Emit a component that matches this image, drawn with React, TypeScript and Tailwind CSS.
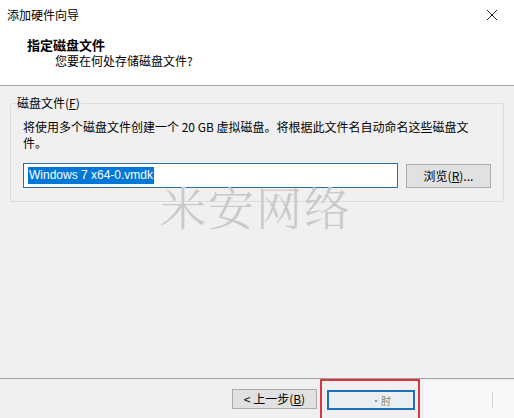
const font = "font-['Microsoft_YaHei','Noto_Sans_CJK_SC',sans-serif]";

export default function App() {
    return (
        <div className={`w-[514px] h-[418px] bg-[#f0f0f0] flex flex-col overflow-hidden text-[12px] text-black ${font}`}>
            {/* Header */}
            <div className="h-[86px] bg-white border-b border-[#a0a0a0] flex flex-col relative">
                <div className="h-[30px] flex items-center pl-[7px] leading-none">添加硬件向导</div>
                <div className="absolute right-[10px] top-[4px] w-[24px] h-[22px] flex items-center justify-center">
                    <svg width="12" height="12" viewBox="0 0 12 12">
                        <path d="M1 1 L11 11 M11 1 L1 11" stroke="#222" strokeWidth="1" />
                    </svg>
                </div>
                <div className="pl-[27px] pt-[6px] font-bold text-[13px] leading-[17px]">指定磁盘文件</div>
                <div className="pl-[55px] leading-[16px]">您要在何处存储磁盘文件?</div>
            </div>

            {/* Group box */}
            <div className="relative mx-[10px] mt-[17px] h-[99px] border border-[#dcdcdc] rounded-[2px] px-[12px]">
                <div className="absolute left-[5px] top-[-9px] bg-[#f0f0f0] px-[1px] leading-[16px]">
                    磁盘文件(<span className="underline">F</span>)
                </div>
                <div className="pt-[15px] leading-[16px]">
                    将使用多个磁盘文件创建一个 20 GB 虚拟磁盘。将根据此文件名自动命名这些磁盘文
                    <br />
                    件。
                </div>
                <div className="flex items-center gap-[8px] mt-[12px]">
                    <div className="w-[375px] h-[25px] bg-white border border-[#2b6fa3] flex items-center pl-[4px]">
                        <span className="bg-[#0078d7] text-white text-[12px] leading-[17px] font-['Liberation_Sans',sans-serif] px-[1px]">
                            Windows 7 x64-0.vmdk
                        </span>
                    </div>
                    <div className="w-[85px] h-[24px] bg-[#e1e1e1] border border-[#adadad] flex items-center justify-center">
                        浏览(<span className="underline">R</span>)...
                    </div>
                </div>
            </div>

            {/* Watermark */}
            <div className="relative h-0">
                <div className="absolute left-[160px] top-[-20px] text-[46px] leading-none text-[#c9c9c9] tracking-[2px] font-['Noto_Serif_CJK_SC','Noto_Sans_CJK_SC',serif] font-light">
                    米安网络
                </div>
            </div>

            <div className="flex-1" />

            {/* Footer */}
            <div className="h-[40px] border-t border-[#a0a0a0] flex items-start">
                <div className="w-[232px]" />
                <div className="mt-[10px] w-[85px] h-[20px] bg-[#e1e1e1] border border-[#adadad] flex items-center justify-center leading-none">
                    &lt; 上一步(<span className="underline">B</span>)
                </div>
                <div className="ml-[3px] w-[100px] h-[40px] border-[2px] border-[#d9363e] border-b-0 pt-[9px] pl-[5px]">
                    <div className="w-[88px] h-[20px] bg-[#e8eef2] border-[2px] border-[#1f6fb8] flex items-center justify-end pr-[22px] text-[#7a8a7a] text-[10px]">
                        ·肘
                    </div>
                </div>
                <div className="ml-[4px] mt-[2px] flex-1 h-[38px] bg-[#f8f8f8] flex items-center">
                    <div className="ml-[68px] w-px h-[16px] bg-[#d0d0d0]" />
                </div>
            </div>
        </div>
    );
}
